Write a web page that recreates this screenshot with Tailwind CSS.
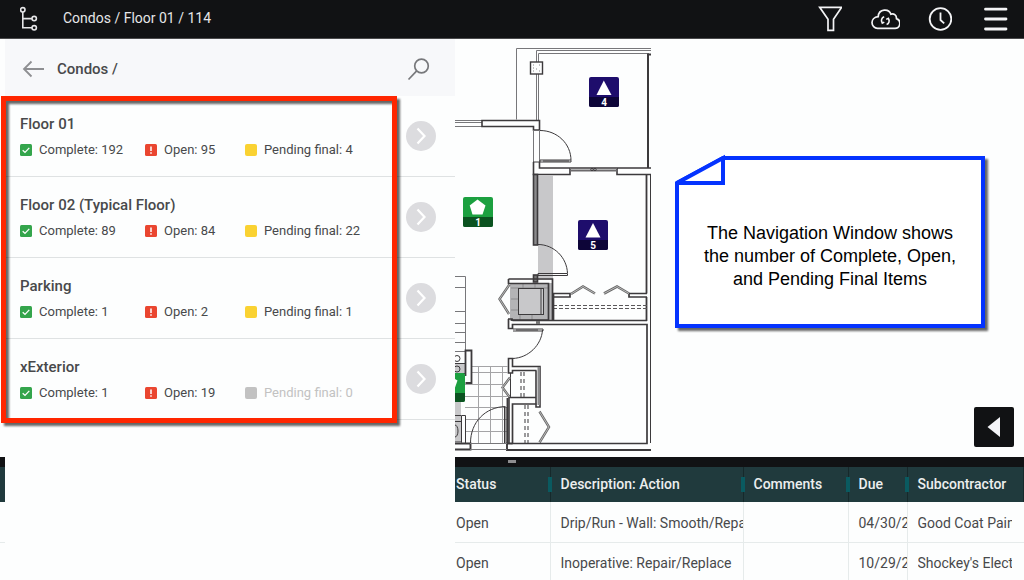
<!DOCTYPE html>
<html lang="en">
<head>
  <meta charset="UTF-8">
  <meta name="viewport" content="width=device-width, initial-scale=1.0">
  <title>Condos / Floor 01 / 114</title>
  <script src="https://cdn.jsdelivr.net/npm/@tailwindcss/browser@4"></script>
</head>
<body class="flex flex-col h-screen overflow-hidden bg-[#fdfefe] font-['Roboto',sans-serif] text-sm text-[#48494b]">

  <!-- Top bar -->
  <header class="shrink-0 flex items-center justify-between bg-[#111214] border-b border-[#4a4a4c] pl-5 pr-4 h-[39px] text-[#e6e6e8]">
    <div class="flex items-center gap-[25px]">
      <button aria-label="Locations">
        <svg class="block w-[18px] h-[26px]" viewBox="0 0 18 26" fill="none" stroke="currentColor" stroke-width="1.6">
          <circle cx="2.8" cy="3.8" r="2.2"/>
          <circle cx="14.2" cy="12.6" r="2.2"/>
          <circle cx="14.2" cy="21.8" r="2.2"/>
          <path d="M2.8 6v15.8H12M2.8 12.6H12"/>
        </svg>
      </button>
      <h1 class="leading-5 -mt-0.5">Condos / Floor 01 / 114</h1>
    </div>
    <div class="flex items-center gap-7 text-[#f4f4f6]">
      <button aria-label="Filter">
        <svg class="block w-6 h-[26px]" viewBox="0 0 24 26" fill="none" stroke="currentColor" stroke-width="1.7">
          <path d="M1.7 1.3h22l-8.200 12V24.400H10V13.300z"/>
        </svg>
      </button>
      <button aria-label="Sync">
        <svg class="block w-[30px] h-[26px]" viewBox="0 0 30 26" fill="none" stroke="currentColor" stroke-width="1.7">
          <path d="M7.500 22.300h17a5 5 0 0 0 2-9.700c.2-3.400-2.800-5.600-5.600-4.400C19.200 2.500 8.800 2.200 8.200 10.600 4 11 2 14 2 16.600c0 3.200 2.500 5.700 5.500 5.700z"/>
          <path d="M14.200 10.800a3.900 3.900 0 0 0-2 6M11.300 14.500l1 2.600 2-1M16.600 18.600a3.900 3.900 0 0 0 1.800-6M19.300 15l-1-2.600-2.100 1" stroke-width="1.600"/>
        </svg>
      </button>
      <button aria-label="History">
        <svg class="block w-6 h-[26px]" viewBox="0 0 24 26" fill="none" stroke="currentColor" stroke-width="1.800">
          <circle cx="12.500" cy="13" r="10.800"/>
          <path d="M12.500 6.500v7.500l3.700 3.300"/>
        </svg>
      </button>
      <button aria-label="Menu">
        <svg class="block w-7 h-[26px]" viewBox="0 0 28 26" stroke="currentColor" stroke-width="2.800" stroke-linecap="round">
          <path d="M5.500 3.200h20.500M5.500 13h20.500M5.500 23h20.500"/>
        </svg>
      </button>
    </div>
  </header>

  <main class="relative flex-1">

    <!-- Floor plan -->
    <section class="relative flex items-start pl-[455px]">
      <svg class="block shrink-0 w-[200px] h-[418px]" viewBox="455 39 200 418" fill="none" stroke="#3c3a3c" stroke-width="1">
        <!-- Balcony -->
        <g stroke="#77777a">
          <path d="M516.500 119.500V48.500H651M536.500 120V50.500H651M538.500 120V53.500H649"/>
        </g>
        <rect x="530.500" y="62" width="12" height="12" fill="#fdfefe" stroke-width="1.400"/>
        <path d="M533 65h1M539 65h1M533 68h1M536 69h1M533 71h1M539 71h1" stroke="#888"/>
        <path d="M651 54.500h-3V168" stroke-width="2"/>
        <path d="M455 120.500h27M455 122.500h27M455 126.500h27" stroke="#77777a"/>
        <path d="M482 120.500h57.500V130H533.500V126.500H482z" stroke-width="1.600"/>
        <path d="M533.500 130v32M539.500 130v32" stroke="#77777a"/>
        <path d="M540 130.500c17 0 31 13 31 30v1.500h-31v-2h31M543 161h26"/>
        <path d="M539.500 162v6H570v6.500H533.500V162M651 168h-34v6.500h34" stroke-width="1.600"/>
        <path d="M533 162h7"/>
        <path d="M570 168h47M570 170.500h47" stroke="#6c6a6c" stroke-width="2"/>
        <circle cx="592" cy="169.500" r="1.200"/><circle cx="595" cy="169.500" r="1.200"/>

        <!-- Bedroom -->
        <rect x="538" y="175" width="15" height="105" fill="#c8c8ca" stroke="none"/>
        <rect x="533.500" y="174.500" width="4" height="70.500" fill="#8a8a8c" stroke-width="1.600"/>
        <path d="M646.500 175V293.500M646.500 297v24" stroke-width="1.800"/>
        <path d="M650.500 175V443"/>
        <path d="M538 244.500c16 0 29 13 29.500 29v2H538v-2h29"/>
        <rect x="533.500" y="275" width="4" height="7" fill="#777" stroke-width="1.600"/>
        <path d="M553 293.500h17v3.500h-17M647 293.500h-18v3.500h18" stroke-width="1.700"/>
        <path d="M571 294l12-7.500 12 7M604 293.500l13-7 12 7" stroke="#666" stroke-width="2.600"/>
        <path d="M571 294l12-7.500 12 7M604 293.500l13-7 12 7" stroke="#ddd" stroke-width=".7"/>
        <path d="M553 305.500h94M553 308.500h94" stroke="#5a585a" stroke-width="1.200" stroke-dasharray="4 2"/>

        <!-- Shower -->
        <rect x="510" y="283" width="42" height="38" fill="#b4b4b6" stroke="none"/>
        <path d="M511 288h37M511 299h8M511 310h8M523 283v5M535 283v5M520 315v5M532 315v5" stroke="#8c8c8e"/>
        <rect x="518.500" y="288.500" width="25" height="26" fill="#c8c8ca"/>
        <path d="M541 288v27"/>
        <path d="M508.500 279h44V320M508.500 279v4.500h40V320H511" stroke-width="1.700"/>
        <path d="M509.500 284.500L499.500 299l9.500 15" stroke="#666" stroke-width="2.400"/>
        <path d="M509.500 284.500L499.500 299l9.500 15" stroke="#ddd" stroke-width=".7"/>

        <!-- Lower room -->
        <path d="M508.500 319v9.500h4V324.500H647V443.500H512.500V404h24M647 320.500H512.500M512 320.500v-1.500h-4M553.500 294v26" stroke-width="1.700"/>
        <path d="M536 322.500h4" stroke="#777" stroke-width="3"/>
        <path d="M542.500 330c-1 15-14 28-30 28.500M513 329h30v2h-30M516 330h22"/>
        <path d="M536.500 370.500h-24V373h-4V358.500h4V366.500H540V407h-4V370.500M536 397.500h-27V443" stroke-width="1.600"/>
        <rect x="537.500" y="367" width="2.500" height="38" fill="#88888a" stroke="none"/>
        <path d="M510.500 373v25"/>
        <path d="M521 372v26M524 372v26M525 405v38M528 405v38" stroke="#5a585a" stroke-width="1.200" stroke-dasharray="4 3"/>
        <path d="M510 377.500L502.500 387.500l7 9.500M539.500 411.500L549 427l-9.500 15.500" stroke="#666" stroke-width="2.400"/>
        <path d="M510 377.500L502.500 387.500l7 9.500M539.500 411.500L549 427l-9.500 15.500" stroke="#ddd" stroke-width=".7"/>

        <!-- Entry -->
        <path d="M472 366.500h36M472 372.500h36M465 384.500h37M465 396.500h43M465 407.500h43M465 419.500h43M465 431.500h43M478.500 366v77M490.500 366v77M502.500 366v77" stroke="#a4a4a6"/>
        <path d="M470.500 443c0-21 15-36 35-36.500M504.500 407v36M506 407v36"/>
        <path d="M455 443.500h15.500v6H455M651 450H507v-6.500h5.500M507.500 398v45" stroke-width="1.900"/>
        <path d="M470 443.500h37M470 449.500h37" stroke="#77777a"/>

        <!-- Kitchen -->
        <path d="M455 276.500h10.500V351M455 287.500h10M455 311.500h10M455 323.500h10M455 332.500h10M455 342.500h10M455 351.500h10" stroke="#77777a"/>
        <rect x="454.500" y="363.500" width="11" height="10" fill="#c8c8ca"/>
        <circle cx="457" cy="358.500" r="3"/><circle cx="457" cy="369" r="3"/>
        <path d="M465.500 376V350.500h6V383h-6" stroke-width="1.800"/>
        <rect x="455" y="402" width="6" height="41" fill="#c8c8ca" stroke="none"/>
        <path d="M455 415.500h6M455 421.500h6M461.500 442.500V415.500h4V443M455 442h7"/>
        <ellipse cx="455" cy="431" rx="3" ry="6"/>

        <!-- Markers -->
        <g stroke="none" class="font-bold text-[10px]" text-anchor="middle">
          <rect x="589" y="77" width="30" height="30" rx="2" fill="#1e0d6c"/>
          <path d="M589 97h30v8a2 2 0 0 1-2 2h-26a2 2 0 0 1-2-2z" fill="#0d0538"/>
          <path d="M603.800 80.500L611.500 95h-15z" fill="#fff"/>
          <text x="604" y="105.500" fill="#fff">4</text>

          <rect x="578" y="220" width="30" height="30" rx="2" fill="#1e0d6c"/>
          <path d="M578 240h30v8a2 2 0 0 1-2 2h-26a2 2 0 0 1-2-2z" fill="#0d0538"/>
          <path d="M593 223l7.500 14.500h-15z" fill="#fff"/>
          <text x="593" y="248.500" fill="#fff">5</text>

          <rect x="463" y="197" width="30" height="30" rx="2" fill="#1ca040"/>
          <path d="M463 217h30v8a2 2 0 0 1-2 2h-26a2 2 0 0 1-2-2z" fill="#0b5220"/>
          <path d="M477.500 199.500l8 6-3 9h-10l-2.800-9z" fill="#fff"/>
          <text x="478" y="225.500" fill="#fff">1</text>

          <rect x="435" y="373" width="30" height="29" rx="2" fill="#1ca040"/>
          <path d="M435 393h30v7a2 2 0 0 1-2 2h-28z" fill="#0b5220"/>
          <path d="M449 375l8.500 5.500-3 8.500h-9z" fill="#fff"/>
        </g>
      </svg>

      <!-- Note with folded corner -->
      <div class="relative shrink-0 ml-5 mt-[117px] w-[310px] h-[172px] pt-[66px] px-5">
        <svg class="absolute inset-0 w-full h-full overflow-visible drop-shadow-[3px_3px_1px_rgba(0,0,0,0.6)]" viewBox="0 0 310 172" fill="#fff" stroke="#0433ff" stroke-width="4">
          <path d="M48 2H308V170H2V27z"/>
          <path d="M48 2V27H2z"/>
        </svg>
        <p class="relative font-['Liberation_Sans',sans-serif] text-lg leading-[23px] text-black text-center">The Navigation Window shows<br>the number of Complete, Open,<br>and Pending Final Items</p>
      </div>

      <button aria-label="Show panel" class="absolute right-[10px] bottom-[10px] flex items-center justify-center w-10 h-10 rounded-xs bg-[#111214]">
        <svg class="w-[14px] h-5" viewBox="0 0 14 20" fill="#f4f4f8"><path d="M13 0v20L.5 10z"/></svg>
      </button>
    </section>

    <!-- Drag handle -->
    <div class="flex justify-center h-[10px] bg-[#111214]">
      <span class="mt-[3px] w-2 h-[3px] bg-[#8e8e90]"></span>
    </div>

    <!-- Items -->
    <table class="w-full table-fixed border-collapse text-left whitespace-nowrap">
      <colgroup>
        <col class="w-[446px]">
        <col class="w-[104px]">
        <col class="w-[193px]">
        <col class="w-[105px]">
        <col class="w-[59px]">
        <col>
      </colgroup>
      <thead>
        <tr class="h-[35px] bg-[#203a3d] text-[#eceeee]">
          <td></td>
          <th class="relative pl-[10px] pb-0.5 font-medium">Status<span class="absolute right-[-2px] top-[10px] w-1 h-[15px] bg-[#0a5a60]"></span></th>
          <th class="relative pl-[10px] pb-0.5 font-medium border-l border-[#16292b]">Description: Action<span class="absolute right-[-2px] top-[10px] w-1 h-[15px] bg-[#0a5a60]"></span></th>
          <th class="relative pl-[10px] pb-0.5 font-medium border-l border-[#16292b]">Comments<span class="absolute right-[-2px] top-[10px] w-1 h-[15px] bg-[#0a5a60]"></span></th>
          <th class="relative pl-[10px] pb-0.5 font-medium border-l border-[#16292b]">Due<span class="absolute right-[-2px] top-[10px] w-1 h-[15px] bg-[#0a5a60]"></span></th>
          <th class="pl-[10px] pb-0.5 font-medium border-x border-[#16292b]">Subcontractor</th>
        </tr>
      </thead>
      <tbody>
        <tr class="h-10 border-b border-[#e6ebeb]">
          <td></td>
          <td class="pl-[10px] pt-0.5">Open</td>
          <td class="pl-[10px] pt-0.5 border-l border-[#e6ebeb] overflow-hidden">Drip/Run - Wall: Smooth/Repair</td>
          <td class="pl-[10px] pt-0.5 border-l border-[#e6ebeb]"></td>
          <td class="pl-[10px] pt-0.5 border-l border-[#e6ebeb] overflow-hidden">04/30/2018</td>
          <td class="pl-[10px] pt-0.5 pr-3 border-l border-[#e6ebeb]"><div class="overflow-hidden">Good Coat Painting</div></td>
        </tr>
        <tr class="h-10">
          <td></td>
          <td class="pl-[10px] pt-0.5">Open</td>
          <td class="pl-[10px] pt-0.5 border-l border-[#e6ebeb] overflow-hidden">Inoperative: Repair/Replace</td>
          <td class="pl-[10px] pt-0.5 border-l border-[#e6ebeb]"></td>
          <td class="pl-[10px] pt-0.5 border-l border-[#e6ebeb] overflow-hidden">10/29/2018</td>
          <td class="pl-[10px] pt-0.5 pr-3 border-l border-[#e6ebeb]"><div class="overflow-hidden">Shockey's Electric</div></td>
        </tr>
      </tbody>
    </table>

    <!-- Navigation window -->
    <nav class="absolute left-[5px] inset-y-0 w-[450px] bg-[#fdfefe]">
      <div class="flex items-center h-[57px] pt-0.5 pl-[17px] pr-[25px] bg-[#f7f8fa]">
        <button aria-label="Back">
          <svg class="block w-6 h-5" viewBox="0 0 24 20" fill="none" stroke="#8e8f92" stroke-width="1.800">
            <path d="M22 10H2.500M9.500 2.500L2 10l7.500 7.500"/>
          </svg>
        </button>
        <h2 class="ml-[11px] flex-1 text-[15px] leading-5 font-medium">Condos /</h2>
        <button aria-label="Search">
          <svg class="block w-6 h-6" viewBox="0 0 24 24" fill="none" stroke="#77787b" stroke-width="1.700">
            <circle cx="15.500" cy="9" r="6.800"/>
            <path d="M10.700 13.800L2.500 22.500"/>
          </svg>
        </button>
      </div>

      <ul>
        <li class="flex items-center justify-between h-[81px] pl-[15px] pr-[19px] border-b border-[#dfe2e3]">
          <div class="pt-0.5">
            <h3 class="text-[15px] leading-5 font-medium">Floor 01</h3>
            <div class="mt-[6px] grid grid-cols-[125px_100px_130px] text-[13px] leading-5">
              <span class="flex items-center gap-[7px]"><svg class="w-3 h-3" viewBox="0 0 12 12" fill="none"><rect width="12" height="12" rx="1.500" fill="#34a54c"/><path d="M2.700 6.200l2.300 2.200 4.300-4.500" stroke="#fff" stroke-width="1.300"/></svg>Complete: 192</span>
              <span class="flex items-center gap-[7px]"><svg class="w-3 h-3" viewBox="0 0 12 12"><rect width="12" height="12" rx="1.500" fill="#ea4630"/><path d="M6 2.500v4.500M6 8.300v1.500" stroke="#fff" stroke-width="1.500"/></svg>Open: 95</span>
              <span class="flex items-center gap-[7px]"><span class="w-3 h-3 rounded-xs bg-[#fad232]"></span>Pending final: 4</span>
            </div>
          </div>
          <button aria-label="Open Floor 01" class="rounded-full bg-[#dcdcdf]">
            <svg class="block w-[30px] h-[30px]" viewBox="0 0 30 30" fill="none" stroke="#fff" stroke-width="2.200"><path d="M11.500 7.500l7 7.500-7 7.500"/></svg>
          </button>
        </li>
        <li class="flex items-center justify-between h-[81px] pl-[15px] pr-[19px] border-b border-[#dfe2e3]">
          <div class="pt-0.5">
            <h3 class="text-[15px] leading-5 font-medium">Floor 02 (Typical Floor)</h3>
            <div class="mt-[6px] grid grid-cols-[125px_100px_130px] text-[13px] leading-5">
              <span class="flex items-center gap-[7px]"><svg class="w-3 h-3" viewBox="0 0 12 12" fill="none"><rect width="12" height="12" rx="1.500" fill="#34a54c"/><path d="M2.700 6.200l2.300 2.200 4.300-4.500" stroke="#fff" stroke-width="1.300"/></svg>Complete: 89</span>
              <span class="flex items-center gap-[7px]"><svg class="w-3 h-3" viewBox="0 0 12 12"><rect width="12" height="12" rx="1.500" fill="#ea4630"/><path d="M6 2.500v4.500M6 8.300v1.500" stroke="#fff" stroke-width="1.500"/></svg>Open: 84</span>
              <span class="flex items-center gap-[7px]"><span class="w-3 h-3 rounded-xs bg-[#fad232]"></span>Pending final: 22</span>
            </div>
          </div>
          <button aria-label="Open Floor 02" class="rounded-full bg-[#dcdcdf]">
            <svg class="block w-[30px] h-[30px]" viewBox="0 0 30 30" fill="none" stroke="#fff" stroke-width="2.200"><path d="M11.500 7.500l7 7.500-7 7.500"/></svg>
          </button>
        </li>
        <li class="flex items-center justify-between h-[81px] pl-[15px] pr-[19px] border-b border-[#dfe2e3]">
          <div class="pt-0.5">
            <h3 class="text-[15px] leading-5 font-medium">Parking</h3>
            <div class="mt-[6px] grid grid-cols-[125px_100px_130px] text-[13px] leading-5">
              <span class="flex items-center gap-[7px]"><svg class="w-3 h-3" viewBox="0 0 12 12" fill="none"><rect width="12" height="12" rx="1.500" fill="#34a54c"/><path d="M2.700 6.200l2.300 2.200 4.300-4.500" stroke="#fff" stroke-width="1.300"/></svg>Complete: 1</span>
              <span class="flex items-center gap-[7px]"><svg class="w-3 h-3" viewBox="0 0 12 12"><rect width="12" height="12" rx="1.500" fill="#ea4630"/><path d="M6 2.500v4.500M6 8.300v1.500" stroke="#fff" stroke-width="1.500"/></svg>Open: 2</span>
              <span class="flex items-center gap-[7px]"><span class="w-3 h-3 rounded-xs bg-[#fad232]"></span>Pending final: 1</span>
            </div>
          </div>
          <button aria-label="Open Parking" class="rounded-full bg-[#dcdcdf]">
            <svg class="block w-[30px] h-[30px]" viewBox="0 0 30 30" fill="none" stroke="#fff" stroke-width="2.200"><path d="M11.500 7.500l7 7.500-7 7.500"/></svg>
          </button>
        </li>
        <li class="flex items-center justify-between h-[81px] pl-[15px] pr-[19px] border-b border-[#dfe2e3]">
          <div class="pt-0.5">
            <h3 class="text-[15px] leading-5 font-medium">xExterior</h3>
            <div class="mt-[6px] grid grid-cols-[125px_100px_130px] text-[13px] leading-5">
              <span class="flex items-center gap-[7px]"><svg class="w-3 h-3" viewBox="0 0 12 12" fill="none"><rect width="12" height="12" rx="1.500" fill="#34a54c"/><path d="M2.700 6.200l2.300 2.200 4.300-4.500" stroke="#fff" stroke-width="1.300"/></svg>Complete: 1</span>
              <span class="flex items-center gap-[7px]"><svg class="w-3 h-3" viewBox="0 0 12 12"><rect width="12" height="12" rx="1.500" fill="#ea4630"/><path d="M6 2.500v4.500M6 8.300v1.500" stroke="#fff" stroke-width="1.500"/></svg>Open: 19</span>
              <span class="flex items-center gap-[7px] text-[#c2c2c2]"><span class="w-3 h-3 rounded-xs bg-[#c2c2c2]"></span>Pending final: 0</span>
            </div>
          </div>
          <button aria-label="Open xExterior" class="rounded-full bg-[#dcdcdf]">
            <svg class="block w-[30px] h-[30px]" viewBox="0 0 30 30" fill="none" stroke="#fff" stroke-width="2.200"><path d="M11.500 7.500l7 7.500-7 7.500"/></svg>
          </button>
        </li>
      </ul>

      <!-- Highlight frame -->
      <div class="absolute -left-1 top-[57px] w-[396px] h-[327px] border-5 border-[#ff2600] drop-shadow-[3px_3px_1px_rgba(0,0,0,0.6)] pointer-events-none"></div>
    </nav>
  </main>

</body>
</html>
